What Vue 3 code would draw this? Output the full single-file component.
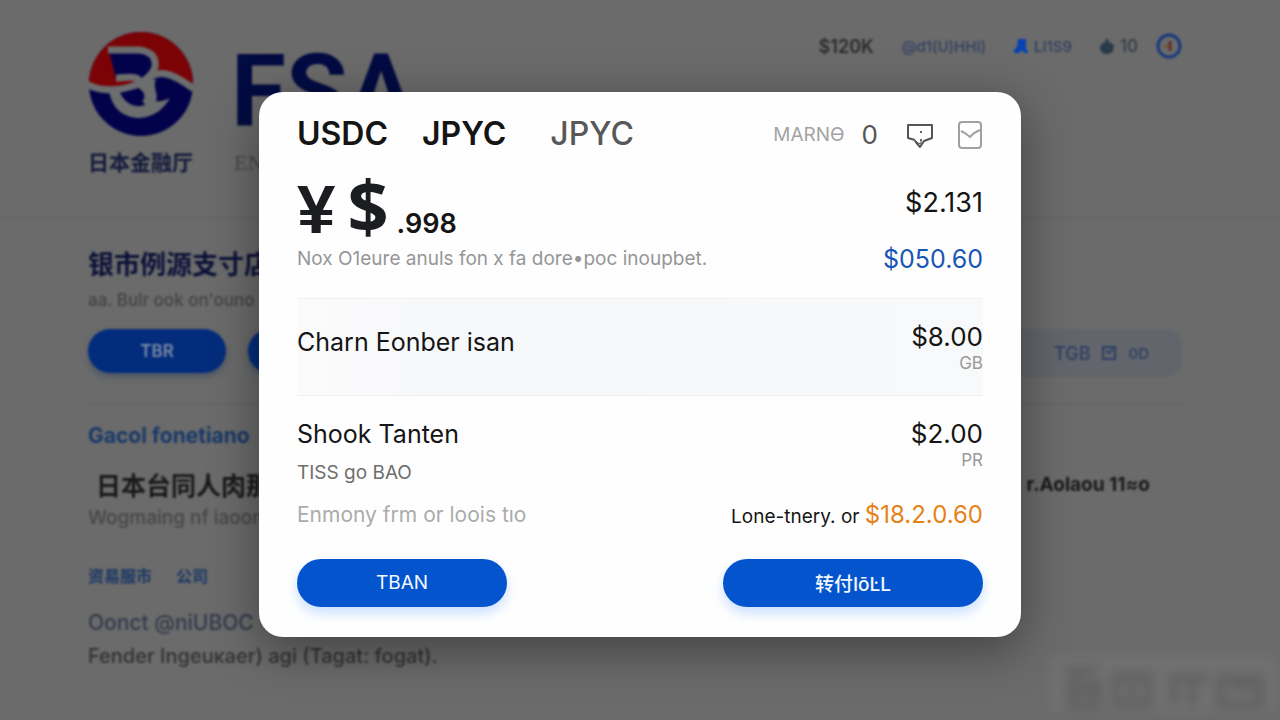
<script setup>
const tabs = [
  { label: 'USDC', tone: 'strong' },
  { label: 'JPYC', tone: 'strong' },
  { label: 'JPYC', tone: 'soft' },
]
</script>

<template>
  <div class="stage">
    <div class="page">
      <header class="site-header">
        <div class="brand">
          <div class="crest">
            <svg class="crest-mark" viewBox="0 0 106 106" aria-hidden="true">
              <circle cx="53" cy="53" r="52" fill="#02024b" />
              <path d="M1 53A52 52 0 0 1 105 53C92 45 84 39 70 41L40 57Q20 62 1 53Z" fill="#7b0305" />
              <path d="M21 20H52Q66 22 66 36L54 50 28 48Z" fill="#02024b" />
              <path d="M20 19H51Q69 21 67 36C64 47 55 48 52 54C61 59 62 67 57 73" fill="none" stroke="#6c6d6e" stroke-width="7" />
              <path d="M0 54C17 62 34 59 48 54Q54 50 48 47C42 45 36 47 28 47" fill="none" stroke="#6c6d6e" stroke-width="7" />
              <path d="M58 50C68 38 82 40 106 58" fill="none" stroke="#6c6d6e" stroke-width="7" />
              <path d="M21 58C23 78 36 87 52 87C67 86 76 77 82 67Q74 71 68 70C71 62 64 57 68 48L54 52C52 58 62 62 61 69C58 79 36 78 31 58Z" fill="#6c6d6e" />
            </svg>
            <span class="crest-name">日本金融厅</span>
          </div>
          <div class="wordmark">
            <span class="wordmark-main">FSA</span>
            <span class="wordmark-sub">EN</span>
          </div>
        </div>
        <nav class="site-nav">
          <a class="nav-strong" href="#price">$120K</a>
          <a class="nav-blue" href="#account">@d1(U)HHI)</a>
          <a class="nav-item nav-blue" href="#alerts">
            <svg width="14" height="16" viewBox="0 0 14 16" aria-hidden="true"><path d="M4 1H12V11L14 13V15H10L8 12 5 15H0V12L3 9Z" fill="#0742b5" /></svg>
            LI1S9
          </a>
          <a class="nav-item" href="#points">
            <svg width="14" height="16" viewBox="0 0 14 16" aria-hidden="true"><path d="M7 0 9 4 14 7 13 13Q11 16 6 16Q0 15 0 10Q0 6 4 5Z" fill="#293a48" /></svg>
            10
          </a>
          <a class="nav-ring" href="#profile" aria-label="Profile">
            <svg width="26" height="26" viewBox="0 0 26 26" aria-hidden="true">
              <circle cx="13" cy="13" r="11" fill="none" stroke="#17387e" stroke-width="3" />
              <path d="M7 13H13" stroke="#74531f" stroke-width="2" />
              <path d="M14 8V18" stroke="#63302f" stroke-width="3" />
            </svg>
          </a>
        </nav>
      </header>

      <main class="content">
        <section class="intro">
          <h1>银市例源支寸店</h1>
          <p class="intro-note">aa. Bulr ook on'ouno</p>
          <div class="actions">
            <div class="action-group">
              <button class="bg-button" type="button">TBR</button>
              <button class="bg-button" type="button" aria-label="More"></button>
            </div>
            <div class="chip">
              <span>TGB</span>
              <svg width="14" height="14" viewBox="0 0 14 14" aria-hidden="true"><path d="M1 1H13V13H1ZM4 5 7 7 11 3" fill="none" stroke="#2b3d62" stroke-width="2" /></svg>
              <span class="chip-small">0D</span>
            </div>
          </div>
        </section>
        <h2>Gacol fonetiano</h2>
        <div class="entry">
          <span class="entry-title">日本台同人肉那</span>
          <span class="entry-side">r.Aolaou 11≈o</span>
        </div>
        <p class="entry-note">Wogmaing nf iaoon</p>
        <div class="links">
          <a href="#market">资易服市</a>
          <a href="#company">公司</a>
        </div>
        <p class="foot-lead">Oonct @niUBOC</p>
        <p class="foot-note">Fender Ingeuĸaer) agi (Tagat: fogat).</p>
      </main>
    </div>

    <div class="smudge" aria-hidden="true">
      <svg viewBox="0 0 226 56">
        <rect width="226" height="56" fill="#747474" />
        <path d="M14 14H48M32 14 26 24M20 28H48V50H20ZM20 38H48M66 20H98V48H66ZM82 20V48M120 22H158M124 24V50M142 22V50M170 22H210V48H170ZM180 30H204" fill="none" stroke="#606060" stroke-width="10" />
      </svg>
    </div>

    <div class="overlay">
      <section class="modal" role="dialog" aria-label="USDC JPYC">
        <header class="modal-head">
          <div class="tabs">
            <button v-for="(tab, i) in tabs" :key="i" type="button" :class="['tab', tab.tone]">{{ tab.label }}</button>
          </div>
          <div class="tools">
            <span class="tool-label">MARNѲ</span>
            <span class="tool-zero">0</span>
            <button class="icon-button" type="button" aria-label="Messages">
              <svg width="28" height="28" viewBox="0 0 28 28" fill="none" stroke="#555" stroke-width="2" stroke-linejoin="round" aria-hidden="true">
                <path d="M9 19 2 17V4H26V17L18 20 14 26 9 20" />
                <path d="M9 19 12 22 15 23V20" stroke-width="1" />
                <circle cx="15" cy="11" r="1" fill="#333" stroke="none" />
                <circle cx="15" cy="19" r="1" fill="#333" stroke="none" />
              </svg>
            </button>
            <button class="icon-button" type="button" aria-label="Inbox">
              <svg width="24" height="30" viewBox="0 0 24 30" fill="none" stroke="#a0a0a0" stroke-width="2" aria-hidden="true">
                <rect x="1" y="2" width="22" height="26" rx="3" />
                <path d="M3 11 7 13 12 17 16 13 22 10" />
              </svg>
            </button>
          </div>
        </header>

        <div class="balance">
          <div class="amount"><span class="yen">¥</span><span class="dollar">$</span><span class="cents">.998</span></div>
          <span class="figure">$2.131</span>
          <p class="caption">Nox O1eure anuls fon x fa dore•poc inoupbet.</p>
          <span class="figure blue">$050.60</span>
        </div>

        <div class="row shaded">
          <span class="name">Charn Eonber isan</span>
          <div class="value"><span class="price">$8.00</span><span class="unit">GB</span></div>
        </div>

        <div class="row">
          <div class="detail">
            <span class="name">Shook Tanten</span>
            <span class="detail-note">TISS go BAO</span>
          </div>
          <div class="value second"><span class="price">$2.00</span><span class="unit">PR</span></div>
        </div>

        <div class="total">
          <span class="total-note">Enmony frm or loois tıo</span>
          <span class="total-value">Lone-tnery. or <strong>$18.2.0.60</strong></span>
        </div>

        <footer class="modal-actions">
          <button class="primary" type="button">TBAN</button>
          <button class="primary wide" type="button">转付ΙōĿL</button>
        </footer>
      </section>
    </div>
  </div>
</template>

<style>
body {
  background: #6b6b6b;
}
</style>

<style scoped>
.stage {
  display: grid;
  min-height: 100vh;
  position: relative;
  overflow: hidden;
  background: #6b6b6b;
  font-family: Inter, "Noto Sans CJK SC", sans-serif;
}
.page,
.overlay {
  grid-area: 1 / 1;
  min-width: 0;
}
.page {
  filter: blur(1px);
}
h1, h2, p {
  margin: 0;
}
button {
  font-family: inherit;
  border: 0;
  padding: 0;
  background: none;
  white-space: nowrap;
}
a {
  color: inherit;
  text-decoration: none;
}
.site-header {
  display: flex;
  justify-content: space-between;
  align-items: flex-start;
  height: 187px;
  padding: 31px 98px 0 88px;
  border-bottom: 1px solid #626262;
}
.brand {
  display: flex;
  gap: 37px;
}
.crest {
  display: flex;
  flex-direction: column;
  gap: 10px;
}
.crest-mark {
  width: 106px;
  height: 106px;
}
.crest-name {
  font-size: 21px;
  line-height: 32px;
  font-weight: 700;
  color: #12183a;
}
.wordmark {
  display: flex;
  flex-direction: column;
}
.wordmark-main {
  font: 700 100px/120px Roboto, sans-serif;
  color: #020b42;
}
.wordmark-sub {
  font: 22px/24px "Liberation Serif", serif;
  color: #484848;
  padding-left: 3px;
}
.site-nav {
  display: flex;
  align-items: center;
  gap: 28px;
  height: 30px;
  font-size: 17px;
  font-weight: 500;
  color: #333c46;
}
.nav-strong {
  font-size: 18px;
  font-weight: 600;
  color: #2c2c2c;
}
.nav-blue {
  color: #304061;
  font-size: 15px;
}
.nav-item {
  display: flex;
  align-items: center;
  gap: 6px;
}
.nav-ring {
  display: flex;
  margin-left: -10px;
}
.content {
  padding: 28px 98px 0 88px;
}
h1 {
  font-size: 26px;
  line-height: 36px;
  color: #0b1138;
}
.intro {
  border-bottom: 1px solid #646464;
  padding-bottom: 26px;
}
.intro-note {
  font-size: 17px;
  line-height: 34px;
  font-weight: 500;
  color: #434343;
}
.actions {
  display: flex;
  justify-content: space-between;
  align-items: center;
  height: 48px;
  padding-top: 12px;
}
.action-group {
  display: flex;
  gap: 22px;
}
.bg-button {
  width: 138px;
  height: 44px;
  margin-bottom: 4px;
  border-radius: 22px;
  background: #032d7c;
  box-shadow: 0 4px 6px #4d5768;
  color: #7d8ca9;
  font-size: 17px;
  font-weight: 600;
}
.chip {
  display: flex;
  align-items: center;
  justify-content: flex-end;
  gap: 12px;
  box-sizing: border-box;
  width: 300px;
  height: 48px;
  padding-right: 33px;
  border-radius: 16px;
  background: #62666c;
  color: #2b3d62;
  font-size: 18px;
  font-weight: 500;
}
.chip-small {
  font-size: 15px;
}
h2 {
  padding-top: 16px;
  font-size: 21px;
  line-height: 32px;
  font-weight: 700;
  color: #183969;
}
.entry {
  display: flex;
  justify-content: space-between;
  align-items: center;
  height: 36px;
  margin: 14px 32px 0 8px;
  font-size: 25px;
  font-weight: 700;
  color: #191919;
}
.entry-side {
  font-size: 19px;
}
.entry-note {
  font-size: 19px;
  line-height: 32px;
  font-weight: 500;
  color: #464646;
}
.links {
  display: flex;
  gap: 24px;
  padding-top: 29px;
  font-size: 16px;
  line-height: 26px;
  font-weight: 700;
  color: #193865;
}
.foot-lead {
  padding-top: 18px;
  font-size: 21px;
  line-height: 32px;
  font-weight: 500;
  color: #323a4c;
}
.foot-note {
  font-size: 20px;
  line-height: 34px;
  font-weight: 500;
  color: #323232;
}
.smudge {
  position: absolute;
  right: 4px;
  bottom: 4px;
  width: 226px;
  filter: blur(5px);
  opacity: 0.6;
}
.overlay {
  z-index: 1;
  display: flex;
  align-items: center;
  justify-content: center;
  padding: 8px 24px 0;
}
.modal {
  box-sizing: border-box;
  width: 100%;
  max-width: 762px;
  padding: 20px 38px 30px;
  border-radius: 24px;
  background: #fefefe;
  box-shadow: 0 12px 50px rgba(0, 0, 0, 0.4);
  color: #151515;
}
.modal-head,
.row,
.total,
.modal-actions {
  display: flex;
  justify-content: space-between;
}
.modal-head {
  align-items: center;
  height: 44px;
}
.tabs {
  display: flex;
  gap: 34px;
}
.tab {
  font-size: 32px;
  line-height: 46px;
  font-weight: 600;
  color: #151515;
}
.tab.soft {
  margin-left: 10px;
  font-weight: 500;
  color: #585858;
}
.tools {
  display: flex;
  align-items: center;
  padding: 2px 1px 0 0;
}
.tool-label {
  font-size: 19px;
  color: #a3a3a3;
}
.tool-zero {
  margin: 0 28px 0 17px;
  font-size: 26px;
  color: #555;
}
.icon-button {
  display: flex;
}
.icon-button + .icon-button {
  margin-left: 24px;
}
.balance {
  display: grid;
  grid-template-columns: 1fr auto;
  grid-template-rows: 72px 30px;
  align-items: center;
  padding: 16px 0 24px;
}
.amount {
  display: flex;
  align-items: baseline;
  color: #1c1d20;
}
.yen {
  font: 700 69px/72px "Liberation Sans", sans-serif;
}
.dollar {
  margin-left: 12px;
  font: 700 72px/72px "Noto Sans", sans-serif;
}
.cents {
  margin-left: 8px;
  font-size: 27px;
  line-height: 32px;
  font-weight: 600;
  color: #151515;
}
.figure {
  justify-self: end;
  font-size: 27px;
  line-height: 30px;
  padding-bottom: 10px;
}
.figure.blue {
  font-size: 25px;
  padding-bottom: 0;
  color: #1856b5;
}
.caption {
  font-size: 19px;
  line-height: 32px;
  color: #969696;
}
.row {
  padding-top: 20px;
}
.row.shaded {
  align-items: center;
  box-sizing: border-box;
  height: 98px;
  padding: 0;
  border: solid #eef0f2;
  border-width: 1px 0;
  background: linear-gradient(90deg, #fbfbfc, #f7f8fa 20%, #f8f9fb);
}
.shaded .name {
  padding-bottom: 10px;
}
.name {
  font-size: 25px;
  line-height: 36px;
}
.detail,
.value {
  display: flex;
  flex-direction: column;
}
.detail-note {
  font-size: 19px;
  line-height: 42px;
  color: #6e6e6e;
}
.value {
  align-items: flex-end;
}
.value.second {
  padding-top: 2px;
}
.price {
  font-size: 26px;
  line-height: 32px;
}
.unit {
  font-size: 17px;
  line-height: 20px;
  color: #999;
}
.total {
  align-items: center;
  height: 42px;
}
.total-note {
  font-size: 21px;
  color: #ababab;
}
.total-value {
  font-size: 19px;
}
.total-value strong {
  font-size: 24px;
  font-weight: 400;
  color: #e68218;
}
.modal-actions {
  padding-top: 23px;
}
.primary {
  width: 210px;
  height: 48px;
  border-radius: 24px;
  background: #0454ce;
  box-shadow: 0 6px 12px #c9e0ff;
  color: #f3f8ff;
  font-size: 19px;
}
.primary.wide {
  width: 260px;
  font-weight: 500;
}
</style>
